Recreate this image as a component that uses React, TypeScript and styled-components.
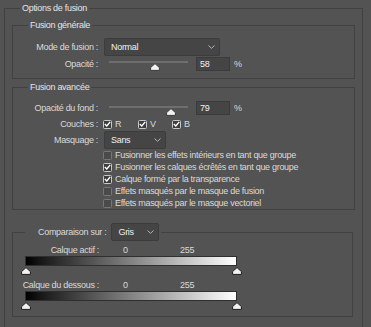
import React from 'react';
import styled, { createGlobalStyle } from 'styled-components';

const GlobalStyle = createGlobalStyle`
  html, body {
    margin: 0;
    padding: 0;
    background: #535353;
  }
  body {
    font-family: "Liberation Sans", Arial, sans-serif;
    font-size: 9px;
    letter-spacing: -0.3px;
    color: #dadada;
  }
`;

const Panel = styled.div`
  width: 371px;
  height: 327px;
  box-sizing: border-box;
  padding: 2px 8px 0 4px;
  overflow: hidden;
  background: #535353;
`;

declare type GroupPropsType = {
  $pad: string
  $mt?: number
  $mr?: number
}

const Group = styled.fieldset<GroupPropsType>`
  margin: ${(p) => p.$mt ?? 0}px ${(p) => p.$mr ?? 0}px 0 0;
  padding: ${(p) => p.$pad};
  border: 1px solid #414141;
  min-width: 0;
`;

declare type LegendPropsType = {
  $ml: number
  $pl?: number
  $pr?: number
}

const Legend = styled.legend<LegendPropsType>`
  margin-left: ${(p) => p.$ml}px;
  padding: 0 ${(p) => p.$pr ?? 2}px 0 ${(p) => p.$pl ?? 2}px;
  line-height: 13px;
  height: 13px;
  color: #e4e4e4;
`;

const CompareLegend = styled(Legend)`
  display: flex;
  align-items: center;
  gap: 5px;
  height: 18px;
  line-height: 18px;
  color: #dadada;
`;

const FormGrid = styled.div`
  display: grid;
  grid-template-columns: 85px 1fr;
  column-gap: 6px;
`;

declare type RowLabelPropsType = {
  $h: number
  $mt?: number
}

const Label = styled.span<RowLabelPropsType>`
  grid-column: 1;
  text-align: right;
  white-space: nowrap;
  height: ${(p) => p.$h}px;
  line-height: ${(p) => p.$h}px;
  margin-top: ${(p) => p.$mt ?? 0}px;
`;

const Field = styled.div<RowLabelPropsType>`
  grid-column: 2;
  display: flex;
  align-items: center;
  height: ${(p) => p.$h}px;
  margin-top: ${(p) => p.$mt ?? 0}px;
`;

const SelectBox = styled.div<{ $w: number }>`
  box-sizing: border-box;
  width: ${(p) => p.$w}px;
  height: 18px;
  display: flex;
  align-items: center;
  justify-content: space-between;
  padding: 0 4px 0 6px;
  background: #454545;
  border: 1px solid #3c3c3c;
  border-radius: 2px;
  color: #f0f0f0;
  line-height: 16px;
`;

const Chevron = () => (
  <svg width="7" height="4" viewBox="0 0 7 4">
    <path d="M0.5 0.5 L3.5 3.3 L6.5 0.5" fill="none" stroke="#b4b4b4" strokeWidth="1" />
  </svg>
);

const Select: React.FunctionComponent<{ value: string; width: number }> = ({ value, width }) => (
  <SelectBox $w={width}>
    <span>{value}</span>
    <Chevron />
  </SelectBox>
);

const SliderBox = styled.div`
  position: relative;
  width: 89px;
  height: 14px;
`;

const Track = styled.div<{ $top: number }>`
  position: absolute;
  left: 5px;
  right: 5px;
  top: ${(p) => p.$top}px;
  height: 2px;
  background: #6e6e6e;
`;

const SliderThumb = styled.svg<{ $top: number }>`
  position: absolute;
  top: ${(p) => p.$top}px;
`;

const NumberBox = styled.div`
  box-sizing: border-box;
  width: 34px;
  height: 14px;
  margin-left: 3px;
  padding-left: 3px;
  background: #454545;
  border: 1px solid #3b3b3b;
  color: #eef2fa;
  line-height: 12px;
`;

const Percent = styled.span`
  margin-left: 4px;
`;

const ThumbShape: React.FunctionComponent<{ outline?: string }> = ({ outline = '#2c2c2c' }) => (
  <path d="M5 0.6 L9.4 4.6 L9.4 7.4 L0.6 7.4 L0.6 4.6 Z" fill="#f2f2f2" stroke={outline} strokeWidth="1" />
);

const ValueSlider: React.FunctionComponent<{ value: number; trackTop: number }> = ({ value, trackTop }) => (
  <>
    <SliderBox>
      <Track $top={trackTop} />
      <SliderThumb
        $top={trackTop + 2}
        width="10"
        height="8"
        viewBox="0 0 10 8"
        style={{ left: 5 + (value / 100) * 79 - 5 }}
      >
        <ThumbShape outline="#3a3a3a" />
      </SliderThumb>
    </SliderBox>
    <NumberBox>{value}</NumberBox>
    <Percent>%</Percent>
  </>
);

const CheckBoxBox = styled.span<{ $checked: boolean }>`
  box-sizing: border-box;
  flex: 0 0 9px;
  width: 9px;
  height: 9px;
  margin-left: -1px;
  border-radius: 1.5px;
  border: 1px solid ${(p) => (p.$checked ? '#c8c8c8' : '#777777')};
  background: ${(p) => (p.$checked ? '#3d3d3d' : '#4a4a4a')};
  display: flex;
  align-items: center;
  justify-content: center;
`;

const CheckItem = styled.label<{ $w?: number }>`
  display: flex;
  align-items: center;
  gap: 3px;
  height: 12px;
  line-height: 12px;
  white-space: nowrap;
  width: ${(p) => (p.$w ? `${p.$w}px` : 'auto')};
`;

const CheckList = styled.div`
  grid-column: 2;
  display: flex;
  flex-direction: column;
`;

const Check: React.FunctionComponent<{ checked: boolean; label: string; width?: number }> = ({
  checked,
  label,
  width,
}) => (
  <CheckItem $w={width}>
    <CheckBoxBox $checked={checked}>
      {checked && (
        <svg width="7" height="6" viewBox="0 0 7 6">
          <path d="M0.8 3 L2.8 5 L6.2 0.9" fill="none" stroke="#ffffff" strokeWidth="1.4" />
        </svg>
      )}
    </CheckBoxBox>
    <span>{label}</span>
  </CheckItem>
);

const BlendBlock = styled.div<{ $mt: number }>`
  margin-top: ${(p) => p.$mt}px;
`;

const BlendHead = styled.div`
  display: flex;
  height: 12px;
  line-height: 12px;
  white-space: nowrap;
`;

const BlendLabel = styled.span`
  width: 86px;
  text-align: right;
`;

const BlendValue = styled.span<{ $ml: number; $w: number }>`
  margin-left: ${(p) => p.$ml}px;
  width: ${(p) => p.$w}px;
`;

const RampBox = styled.div`
  position: relative;
  margin-left: 12px;
  width: 212px;
  height: 22px;
`;

const Ramp = styled.div`
  box-sizing: border-box;
  height: 10px;
  border: 1px solid #2f2f2f;
  background: linear-gradient(to right, #000000 0%, #1a1a1a 8%, #ffffff 100%);
`;

const RampThumb = styled.svg`
  position: absolute;
  top: 11px;
`;

const BlendRamp: React.FunctionComponent<{ label: string; mt: number }> = ({ label, mt }) => (
  <BlendBlock $mt={mt}>
    <BlendHead>
      <BlendLabel>{label}</BlendLabel>
      <BlendValue $ml={24} $w={57}>0</BlendValue>
      <BlendValue $ml={0} $w={30}>255</BlendValue>
    </BlendHead>
    <RampBox>
      <Ramp />
      <RampThumb width="10" height="8" viewBox="0 0 10 8" style={{ left: -4 }}>
        <ThumbShape outline="#1c1c1c" />
      </RampThumb>
      <RampThumb width="10" height="8" viewBox="0 0 10 8" style={{ left: 207 }}>
        <ThumbShape outline="#1c1c1c" />
      </RampThumb>
    </RampBox>
  </BlendBlock>
);

const advancedOptions = [
  { label: 'Fusionner les effets intérieurs en tant que groupe', checked: false },
  { label: 'Fusionner les calques écrêtés en tant que groupe', checked: true },
  { label: 'Calque formé par la transparence', checked: true },
  { label: 'Effets masqués par le masque de fusion', checked: false },
  { label: 'Effets masqués par le masque vectoriel', checked: false },
];

const App: React.FunctionComponent = () => {
  return (
    <>
      <GlobalStyle />
      <Panel>
        <Group $pad="4px 7px 12px 7px">
          <Legend $ml={8}>Options de fusion</Legend>

          {/* fusion générale */}
          <Group $pad="6px 0 7px 0">
            <Legend $ml={15}>Fusion générale</Legend>
            <FormGrid>
              <Label $h={18}>Mode de fusion :</Label>
              <Field $h={18}>
                <Select value="Normal" width={116} />
              </Field>
              <Label $h={14} $mt={1}>Opacité :</Label>
              <Field $h={14} $mt={1}>
                <ValueSlider value={58} trackTop={4} />
              </Field>
            </FormGrid>
          </Group>

          {/* fusion avancée */}
          <Group $pad="7px 0 0 0" $mt={2}>
            <Legend $ml={15}>Fusion avancée</Legend>
            <FormGrid>
              <Label $h={14}>Opacité du fond :</Label>
              <Field $h={14}>
                <ValueSlider value={79} trackTop={5} />
              </Field>
              <Label $h={12} $mt={3}>Couches :</Label>
              <Field $h={12} $mt={3}>
                <Check checked label="R" width={35} />
                <Check checked label="V" width={34} />
                <Check checked label="B" />
              </Field>
              <Label $h={18} $mt={1}>Masquage :</Label>
              <Field $h={18} $mt={1}>
                <Select value="Sans" width={62} />
              </Field>
              <CheckList>
                {advancedOptions.map((opt) => (
                  <Check key={opt.label} checked={opt.checked} label={opt.label} />
                ))}
              </CheckList>
            </FormGrid>
          </Group>

          {/* comparaison */}
          <Group $pad="3px 0 3px 0" $mt={13} $mr={2}>
            <CompareLegend $ml={12} $pl={13} $pr={2}>
              <span>Comparaison sur :</span>
              <Select value="Gris" width={48} />
            </CompareLegend>
            <BlendRamp label="Calque actif :" mt={0} />
            <BlendRamp label="Calque du dessous :" mt={1} />
          </Group>
        </Group>
      </Panel>
    </>
  );
};

export default App;
